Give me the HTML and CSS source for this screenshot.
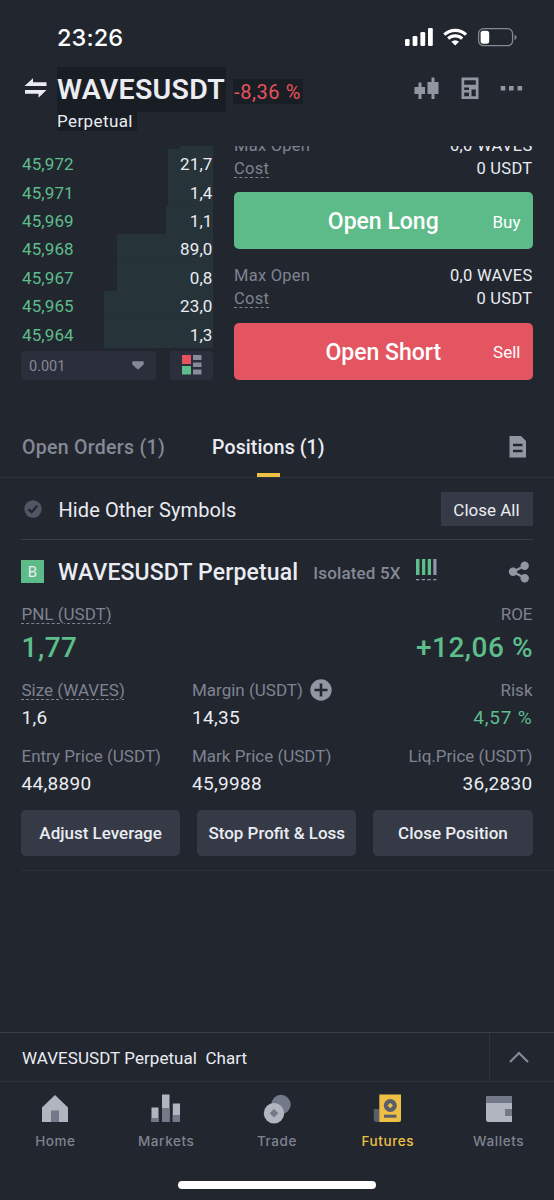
FILE: index.html
```html
<!DOCTYPE html>
<html lang="en">
<head>
<meta charset="utf-8">
<title>WAVESUSDT Perpetual</title>
<link rel="stylesheet" href="styles.css">
</head>
<body>
<div class="app">
  <div class="status">
    <span class="time">23:26</span>
    <svg class="status-icons" width="114" height="20" viewBox="0 0 114 20">
      <g fill="#fff">
        <rect x="1" y="11" width="4.6" height="7" rx="1.3"/><rect x="8.6" y="8" width="4.8" height="10" rx="1.3"/><rect x="16.4" y="4" width="4.8" height="14" rx="1.3"/><rect x="24" y="0" width="4.8" height="18" rx="1.3"/>
        <path d="M51.200 17.600L47.400 13.800A5.400 5.400 0 0 1 55 13.800Z"/>
      </g>
      <g fill="none" stroke="#fff" stroke-width="3.100"><path d="M40.300 6.700A15.800 15.800 0 0 1 62.100 6.700"/><path d="M44.200 10.700A10.200 10.200 0 0 1 58.200 10.700"/></g>
      <rect x="74.600" y=".7" width="34" height="17" rx="5" fill="none" stroke="#858990" stroke-width="1.300"/>
      <rect x="76.600" y="2.700" width="8.600" height="13" rx="2.600" fill="#fff"/>
      <path d="M110.600 6.500Q112.500 7.500 112.500 9.300T110.600 12.200Z" fill="#858990"/>
    </svg>
  </div>
  <header class="head">
    <svg class="swap" width="24" height="22" viewBox="0 0 24 22" fill="#eaecf2"><path d="M.5 9L9 1.200V5.200H22.500V9ZM22.500 13L14.500 20.800V16.800H1V13Z"/></svg>
    <div class="pair"><h1>WAVESUSDT</h1><span class="kind">Perpetual</span></div>
    <span class="change">-8,36 %</span>
    <div class="head-icons">
      <svg width="26" height="24" viewBox="0 0 26 24" fill="#9296a2"><path d="M4.500 5.500H7.500V10H11V17H7.500V22H4.500V17H.5V10H4.500ZM17.500 .5H20.500V5H24.500V17H20.500V22H17.500V17H13.500V5H17.500Z"/></svg>
      <svg width="18" height="24" viewBox="0 0 18 24" fill="#9296a2"><path fill-rule="evenodd" d="M.5 .5H17.500V22H.5ZM3.200 3.200V7.800H14.800V3.200ZM3.200 10.500V13H8V10.500ZM3.200 15.600V19.300H8V15.600ZM10.500 12.500V19.300H14.800V12.500Z"/></svg>
      <svg width="24" height="24" viewBox="0 0 24 24" fill="#9296a2"><path d="M.7 9H5.300V13.600H.7ZM9 9H13.600V13.600H9ZM17.500 9H22.100V13.600H17.500Z"/></svg>
    </div>
  </header>

  <section class="trade">
    <div class="book">
      <ul class="bids">
        <li class="cut"></li>
        <li class="d1"><span>45,972</span><b>21,7</b></li>
        <li class="d1"><span>45,971</span><b>1,4</b></li>
        <li class="d2"><span>45,969</span><b>1,1</b></li>
        <li class="d3"><span>45,968</span><b>89,0</b></li>
        <li class="d3"><span>45,967</span><b>0,8</b></li>
        <li class="d4"><span>45,965</span><b>23,0</b></li>
        <li class="d4"><span>45,964</span><b>1,3</b></li>
      </ul>
      <div class="controls">
        <div class="select"><span>0.001</span><svg width="12" height="9" viewBox="0 0 12 9"><path d="M.3 .3H11.700V3.500L6 8.700L.3 3.500Z" fill="#858995"/></svg></div>
        <div class="mode"><svg width="20" height="20" viewBox="0 0 20 20"><path d="M0 0H9V9H0Z" fill="#e5535f"/><path d="M0 11H9V19.500H0Z" fill="#5dbd8b"/><path d="M11 0H19.500V5H11ZM11 7.500H19.500V12H11ZM11 14.500H19.500V19.500H11Z" fill="#888c98"/></svg></div>
      </div>
    </div>
    <div class="order">
      <div class="limits"><div><span>Max Open</span><b>0,0 WAVES</b></div><div><span class="dash">Cost</span><b>0 USDT</b></div></div>
      <div class="cta long"><strong>Open Long</strong><span>Buy</span></div>
      <div class="limits"><div><span>Max Open</span><b>0,0 WAVES</b></div><div><span class="dash">Cost</span><b>0 USDT</b></div></div>
      <div class="cta short"><strong>Open Short</strong><span>Sell</span></div>
    </div>
  </section>

  <nav class="tabs">
    <span class="tab">Open Orders (1)</span>
    <span class="tab on">Positions (1)</span>
    <svg width="18" height="22" viewBox="0 0 18 22"><path d="M.5 0H12L17 5V21.500H.5Z" fill="#9296a2"/><path d="M4 9H13.500M4 15H13.500" stroke="#22262f" stroke-width="2.600"/></svg>
  </nav>

  <section class="filter">
    <svg width="18" height="18" viewBox="0 0 18 18"><circle cx="9" cy="9" r="8.700" fill="#515665"/><path d="M4.500 9.200L7.600 12.200L13.300 5.800" fill="none" stroke="#22262f" stroke-width="2.300"/></svg>
    <span class="hide">Hide Other Symbols</span>
    <span class="close-all">Close All</span>
  </section>

  <section class="position">
    <div class="title">
      <span class="side">B</span>
      <h2>WAVESUSDT Perpetual</h2>
      <span class="lev">Isolated 5X</span>
      <svg class="adl" width="22" height="23" viewBox="0 0 22 23"><path d="M0 0H3.500V16H0ZM6 0H9.300V16H6ZM11.700 0H15V16H11.700Z" fill="#5dbd8b"/><path d="M17.300 0H20.500V16H17.300Z" fill="#9296ac"/><path d="M0 20.700H20.500" stroke="#9296a2" stroke-width="1.300" stroke-dasharray="3.300 2.400"/></svg>
      <svg class="share" width="22" height="22" viewBox="0 0 22 22" fill="#9296a2"><path d="M5 10.800L16.500 5M5 10.800L16.500 17" stroke="#9296a2" stroke-width="2.400"/><circle cx="5" cy="10.800" r="4.200"/><circle cx="16.700" cy="4.700" r="4.200"/><circle cx="16.700" cy="17.200" r="4.200"/></svg>
    </div>
    <div class="row pnl">
      <div><span class="label dash">PNL (USDT)</span><b>1,77</b></div>
      <div class="end"><span class="label">ROE</span><b>+12,06 %</b></div>
    </div>
    <div class="row stats">
      <div><span class="label dash">Size (WAVES)</span><b>1,6</b></div>
      <div><span class="label">Margin (USDT)<svg width="22" height="22" viewBox="0 0 22 22"><circle cx="11" cy="11" r="10.700" fill="#9296a2"/><path d="M4.500 11H17.500M11 4.500V17.500" stroke="#22262f" stroke-width="2.600"/></svg></span><b>14,35</b></div>
      <div class="end"><span class="label">Risk</span><b class="up">4,57 %</b></div>
    </div>
    <div class="row stats">
      <div><span class="label">Entry Price (USDT)</span><b>44,8890</b></div>
      <div><span class="label">Mark Price (USDT)</span><b>45,9988</b></div>
      <div class="end"><span class="label">Liq.Price (USDT)</span><b>36,2830</b></div>
    </div>
    <div class="actions"><span>Adjust Leverage</span><span>Stop Profit &amp; Loss</span><span>Close Position</span></div>
  </section>

  <div class="chart"><span>WAVESUSDT Perpetual&nbsp; Chart</span><div class="expand"><svg width="20" height="12" viewBox="0 0 20 12"><path d="M1 11L10 2L19 11" fill="none" stroke="#858995" stroke-width="2.200"/></svg></div></div>

  <nav class="bottom">
    <div><svg width="30" height="30" viewBox="0 0 30 30"><path d="M15 1L28 13.500V28H2V13.500Z" fill="#b1b5bf"/><path d="M11 16.500H19V28H11Z" fill="#747989"/></svg><span>Home</span></div>
    <div><svg width="30" height="30" viewBox="0 0 30 30"><path d="M.5 13.500H7.500V28H.5ZM11 .5H18.500V28H11ZM21.800 9.500H29V28H21.800Z" fill="#b1b5bf"/><path d="M.5 24H7.500V28H.5ZM11 14H18.500V28H11ZM21.800 21H29V28H21.800Z" fill="#747989"/></svg><span>Markets</span></div>
    <div><svg width="30" height="30" viewBox="0 0 30 30"><circle cx="19" cy="10.500" r="9.700" fill="#747989"/><circle cx="12" cy="19.200" r="10.200" fill="#b1b5bf"/><path d="M12 15L16.300 19.200L12 23.400L7.700 19.200Z" fill="#747989"/></svg><span>Trade</span></div>
    <div class="on"><svg width="30" height="30" viewBox="0 0 30 30"><path d="M.8 15H6.500V28H4Q.8 28 .8 25Z" fill="#595e6d"/><path d="M6.300 .5H28V26Q28 28 26 28H6.300Z" fill="#edc044"/><circle cx="17.300" cy="11.500" r="6.500" fill="#595e6d"/><path d="M17.300 8.700L20.100 11.500L17.300 14.300L14.500 11.500Z" fill="#edc044"/><path d="M11 20.700H23.500V23.700H11Z" fill="#595e6d"/></svg><span>Futures</span></div>
    <div><svg width="30" height="30" viewBox="0 0 30 30"><path d="M2 4Q2 2 4 2H28V28H4.500Q2 28 2 25.500Z" fill="#b1b5bf"/><path d="M2 4.500Q2 2 4.500 2H28V9H2ZM21 15H28V22H21Z" fill="#747989"/></svg><span>Wallets</span></div>
  </nav>
  <div class="indicator"></div>
</div>
</body>
</html>
```
FILE: styles.css
```css
* { box-sizing: border-box; }
body { margin: 0; background: #22262f; color: #eaecf2; font-family: Roboto, "Liberation Sans", sans-serif; }
h1, h2, ul { margin: 0; padding: 0; list-style: none; }
b { font-weight: 400; }
svg { display: block; flex: none; }
span, b, strong, h1, h2 { white-space: nowrap; }
.app { width: 554px; height: 1200px; display: flex; flex-direction: column; overflow: hidden; }

.status { height: 67px; flex: none; display: flex; justify-content: space-between; padding: 0 36px 0 57px; }
.time { font: 500 23.500px/30px Inter, sans-serif; color: #fff; padding-top: 23px; letter-spacing: .1px; }
.status-icons { margin-top: 28px; }

.head { height: 79px; flex: none; display: flex; align-items: flex-start; padding: 0 30px 0 24px; }
.swap { margin: 10px 9px 0 0; }
.pair { display: flex; flex-direction: column; align-items: flex-start; }
.pair h1 { background: #191d24; width: 169px; height: 45px; font-size: 28.500px; font-weight: 600; line-height: 45px; letter-spacing: .25px; }
.kind { background: #191d24; width: 80px; height: 19px; font-size: 17px; line-height: 18px; letter-spacing: .4px; }
.change { background: #191d24; color: #e5535f; width: 70px; height: 25px; margin: 12px 0 0 7px; padding-left: 1px; font-size: 20px; line-height: 26px; letter-spacing: .6px; }
.head-icons { margin: 10px 0 0 auto; display: flex; gap: 21.500px; }
.head-icons svg:nth-child(2) { margin-left: -1px; }

.trade { height: 234px; flex: none; display: flex; gap: 21px; padding: 0 21.500px 0 21px; overflow: hidden; }
.book { width: 192px; }
.bids li { height: 28.430px; display: flex; justify-content: space-between; align-items: center; padding: 2px .5px 0 1px; font-size: 17px; letter-spacing: .1px; }
.bids span { color: #5dbd8b; }
.bids .cut { height: 3px; padding: 0; background: linear-gradient(#263338, #263338) right / 33px 100% no-repeat; }
.bids .d1 { background: linear-gradient(#263338, #263338) right / 45px 100% no-repeat; }
.bids .d2 { background: linear-gradient(#263338, #263338) right / 47px 100% no-repeat; }
.bids .d3 { background: linear-gradient(#263338, #263338) right / 96px 100% no-repeat; }
.bids .d4 { background: linear-gradient(#263338, #263338) right / 109px 100% no-repeat; }
.controls { display: flex; justify-content: space-between; padding-top: 3px; }
.select, .mode { height: 29px; background: #2b2f3b; border-radius: 4px; display: flex; align-items: center; }
.select { width: 135px; justify-content: space-between; padding: 0 12px 0 8px; color: #858995; font-size: 14.500px; }
.select span { padding-top: 2px; }
.mode { width: 43px; justify-content: center; }

.order { flex: 1; margin-top: -12px; }
.limits { height: 58px; font-size: 16.500px; line-height: 23px; }
.limits + .cta + .limits { height: 73.500px; padding-top: 15px; }
.limits div { display: flex; justify-content: space-between; }
.limits span { color: #7f8390; letter-spacing: .25px; }
.limits b { letter-spacing: .3px; }
.dash { text-decoration: underline dashed 1.300px; text-underline-offset: 3px; }
.cta { height: 57px; border-radius: 5px; display: grid; grid-template-columns: 1fr auto 1fr; align-items: center; padding: 2px 12px 0; color: #fff; }
.cta strong { grid-column: 2; font-size: 23px; font-weight: 500; }
.cta span { justify-self: end; font-size: 17px; }
.long { background: #5dbb89; }
.short { background: #e35561; }

.tabs { height: 98px; flex: none; display: flex; align-items: flex-end; border-bottom: 1px solid #2d323b; padding: 0 27px 0 22px; }
.tab { height: 41px; font-size: 19.500px; font-weight: 500; line-height: 24px; letter-spacing: .3px; color: #858995; margin-right: 47px; }
.tab.on { color: #eaecf2; letter-spacing: .1px; background: linear-gradient(#edc044, #edc044) center bottom / 23px 4px no-repeat; }
.tabs svg { margin: 0 0 19px auto; }

.filter { height: 62px; flex: none; margin: 0 21.500px 0 21px; border-bottom: 1.500px solid #393e49; display: flex; align-items: center; padding-left: 3px; }
.hide { margin-left: 16.500px; padding-top: 2px; font-size: 20px; letter-spacing: .08px; }
.close-all { margin-left: auto; width: 92px; height: 34px; background: #353a46; font-size: 17px; line-height: 36px; text-align: center; }

.position { height: 331px; flex: none; margin-left: 21px; padding-right: 21.500px; border-bottom: 1px solid #2b3039; }
.title { height: 63px; display: flex; align-items: center; }
.side { width: 23px; height: 23px; background: #5dbb89; font-size: 15px; line-height: 24px; text-align: center; }
.title h2 { margin-left: 14px; padding-top: 2px; font-size: 23px; font-weight: 500; letter-spacing: .15px; }
.lev { margin-left: 15px; padding-top: 2px; font-size: 17px; font-weight: 500; letter-spacing: .15px; color: #858995; }
.adl { margin: -2px 0 0 15px; }
.share { margin-left: auto; margin-right: 3px; }
.row { display: flex; }
.row > div { flex: 1; display: flex; flex-direction: column; align-items: flex-start; padding-left: .5px; }
.row > .end { align-items: flex-end; }
.label { height: 22px; line-height: 22px; font-size: 17px; color: #7f8390; display: flex; align-items: center; gap: 7px; }
.label.dash { display: block; }
.pnl { height: 76px; }
.pnl b { color: #5dbd8b; font-size: 28px; font-weight: 500; line-height: 46px; letter-spacing: .5px; }
.pnl .end b { margin-right: -.5px; }
.stats { height: 65.500px; }
.stats b { font-size: 19px; line-height: 33px; letter-spacing: .3px; }
.stats .up { color: #5dbd8b; letter-spacing: .8px; }
.actions { display: flex; gap: 17px; }
.actions span { flex: 1; height: 45.500px; background: #353a46; border-radius: 5px; font-size: 17px; font-weight: 500; line-height: 46px; text-align: center; }

.chart { height: 50px; flex: none; margin-top: 161px; border-top: 1px solid #393e49; border-bottom: 1px solid #2d323b; display: flex; justify-content: space-between; padding-left: 22px; font-size: 17px; line-height: 50px; letter-spacing: .05px; }
.expand { width: 65px; border-left: 1px solid #2d323b; display: flex; align-items: center; padding-left: 19px; }
.bottom { height: 99px; flex: none; display: flex; padding-top: 12px; }
.bottom div { flex: 1; display: flex; flex-direction: column; align-items: center; font: 500 13.500px/20px Inter, sans-serif; letter-spacing: .6px; color: #7f8390; gap: 7px; }
.bottom .on { color: #edc044; }
.indicator { width: 198px; height: 8px; flex: none; border-radius: 4px; background: #fff; margin: 0 auto; }
```
